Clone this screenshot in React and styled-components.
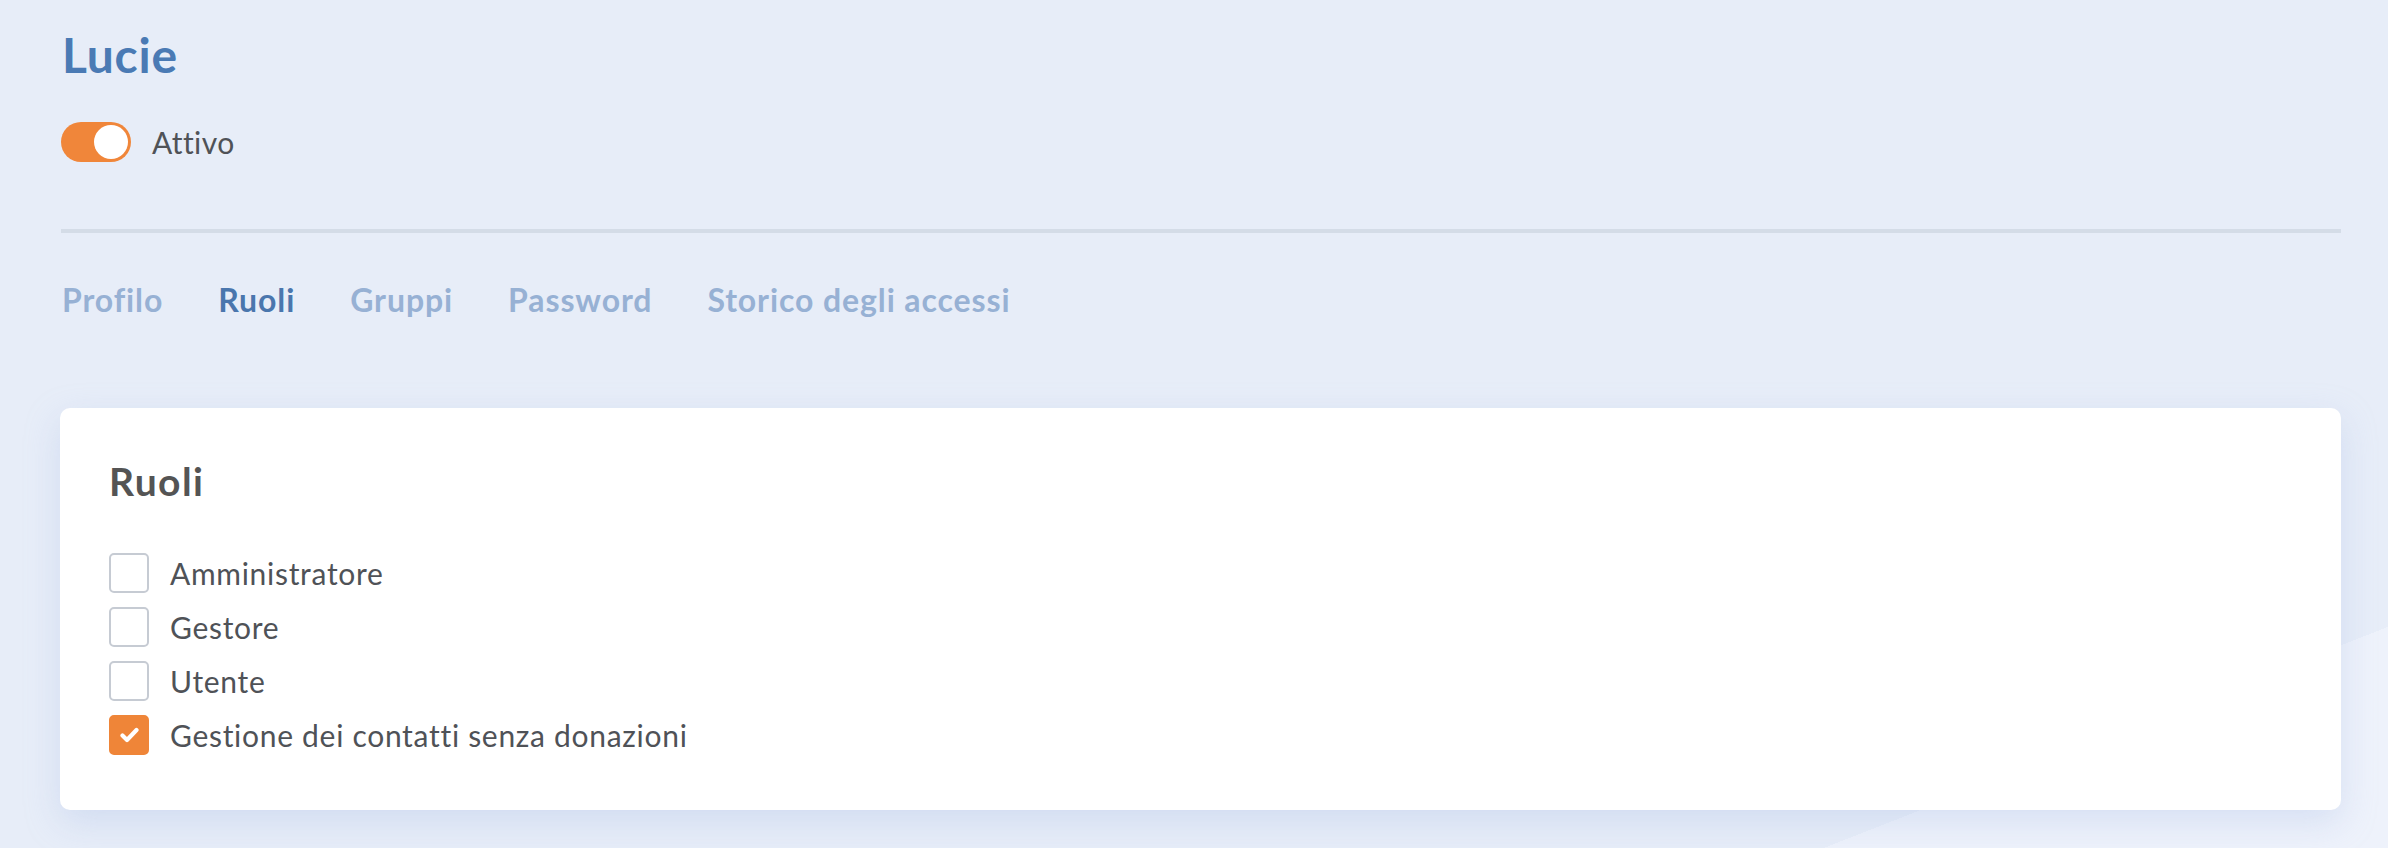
import React from "react";
import styled, { createGlobalStyle } from "styled-components";

const GlobalStyle = createGlobalStyle`
  html, body { margin: 0; padding: 0; }
  body {
    font-family: "Lato", "Noto Sans", sans-serif;
    background: #e7edf8;
  }
  * { box-sizing: border-box; }
`;

const Page = styled.div`
  min-height: 100vh;
  padding: 26px 47px 0 60px;
  background: linear-gradient(158.6deg, #e7edf8 1455px, #eef2fb 1455px);
`;

const Title = styled.h1`
  margin: 0 0 0 2px;
  font-size: 48px;
  line-height: 1.2;
  font-weight: 700;
  letter-spacing: 0.8px;
  color: #4a7ab4;
`;

const StatusRow = styled.div`
  display: flex;
  align-items: center;
  gap: 21px;
  margin-top: 38px;
  margin-left: 1px;
`;

const Toggle = styled.button`
  position: relative;
  width: 70px;
  height: 40px;
  padding: 0;
  border: none;
  border-radius: 20px;
  background: ${(p) => (p.$on ? "#f0863a" : "#c9d1dc")};
  cursor: pointer;
  &::after {
    content: "";
    position: absolute;
    top: 3px;
    left: ${(p) => (p.$on ? "33px" : "3px")};
    width: 34px;
    height: 34px;
    border-radius: 50%;
    background: #ffffff;
  }
`;

const StatusLabel = styled.span`
  font-size: 30px;
  line-height: 1.2;
  letter-spacing: 0.4px;
  color: #4f5257;
`;

const Divider = styled.hr`
  margin: 67px 0 0 1px;
  border: none;
  height: 4px;
  background: #d4dce7;
`;

const Tabs = styled.nav`
  display: flex;
  gap: 55px;
  margin-top: 48px;
  margin-left: 2px;
`;

const Tab = styled.a`
  font-size: 32px;
  line-height: 1.2;
  font-weight: 700;
  letter-spacing: 0.9px;
  text-decoration: none;
  color: ${(p) => (p.$active ? "#4a76ad" : "#97b1d4")};
  cursor: pointer;
`;

const Card = styled.section`
  margin-top: 89px;
  padding: 50px 49px 55px;
  background: #ffffff;
  border-radius: 10px;
  box-shadow: 0 12px 34px rgba(170, 190, 230, 0.35);
`;

const CardTitle = styled.h2`
  margin: 0 0 48px 0;
  font-size: 39px;
  line-height: 1.2;
  font-weight: 700;
  letter-spacing: 1.4px;
  color: #545454;
`;

const List = styled.div`
  display: flex;
  flex-direction: column;
  gap: 14px;
`;

const Option = styled.label`
  display: flex;
  align-items: center;
  gap: 21px;
  height: 40px;
  cursor: pointer;
`;

const Box = styled.span`
  display: flex;
  align-items: center;
  justify-content: center;
  width: 40px;
  height: 40px;
  border-radius: 5px;
  border: 2px solid ${(p) => (p.$checked ? "#ef8538" : "#c6cbd3")};
  background: ${(p) => (p.$checked ? "#ef8538" : "#ffffff")};
`;

const OptionLabel = styled.span`
  font-size: 30px;
  line-height: 1.2;
  letter-spacing: 0.7px;
  color: #4f5257;
`;

const Check = () => (
  <svg width="19" height="16" viewBox="0 0 19 16" aria-hidden="true">
    <polyline
      points="2.5,8.5 7,13 16.5,3"
      fill="none"
      stroke="#ffffff"
      strokeWidth="4.2"
      strokeLinecap="round"
      strokeLinejoin="round"
    />
  </svg>
);

const tabs = ["Profilo", "Ruoli", "Gruppi", "Password", "Storico degli accessi"];
const roles = [
  { name: "Amministratore", checked: false },
  { name: "Gestore", checked: false },
  { name: "Utente", checked: false },
  { name: "Gestione dei contatti senza donazioni", checked: true },
];

export default function App() {
  return (
    <>
      <GlobalStyle />
      <Page>
        <Title>Lucie</Title>
        <StatusRow>
          <Toggle $on aria-label="Attivo" />
          <StatusLabel>Attivo</StatusLabel>
        </StatusRow>
        <Divider />
        <Tabs>
          {tabs.map((t) => (
            <Tab key={t} $active={t === "Ruoli"}>
              {t}
            </Tab>
          ))}
        </Tabs>
        <Card>
          <CardTitle>Ruoli</CardTitle>
          <List>
            {roles.map((r) => (
              <Option key={r.name}>
                <Box $checked={r.checked}>{r.checked && <Check />}</Box>
                <OptionLabel>{r.name}</OptionLabel>
              </Option>
            ))}
          </List>
        </Card>
      </Page>
    </>
  );
}
